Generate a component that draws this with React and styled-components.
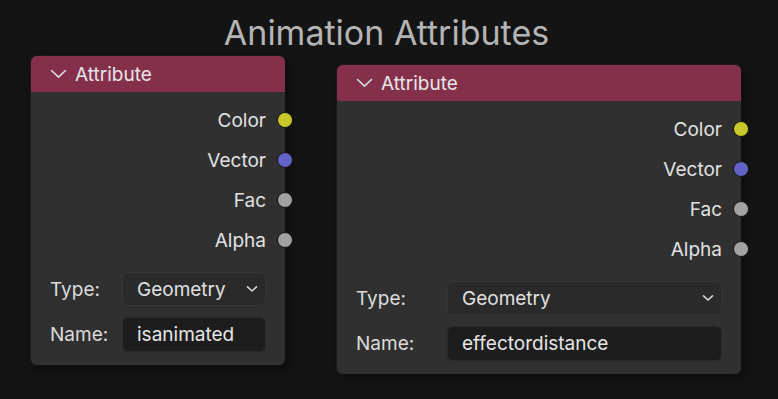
import React from 'react';
import styled, { createGlobalStyle } from 'styled-components';

const GlobalStyle = createGlobalStyle`
  html, body {
    margin: 0;
    padding: 0;
    background: #141414;
  }
  body {
    font-family: Inter, "Noto Sans", "Liberation Sans", sans-serif;
  }
`;

// Canvas & frame label
const Canvas = styled.div`
  position: relative;
  width: 778px;
  height: 399px;
  overflow: hidden;
  background: #141414;
`;

const FrameLabel = styled.div`
  text-align: center;
  padding-top: 11px;
  padding-right: 5px;
  font-size: 34px;
  line-height: 44px;
  color: #b4b4b4;
`;

// Node styles
const Node = styled.div`
  position: absolute;
  left: ${({ $x }) => $x}px;
  top: ${({ $y }) => $y}px;
  width: ${({ $w }) => $w}px;
  background: #303030;
  border-radius: 6px;
  box-shadow: 3px 3px 8px rgba(0, 0, 0, 0.55), 0 0 0 1px rgba(255, 255, 255, 0.04);
  color: #e2e2e2;
`;

const Header = styled.div`
  display: flex;
  align-items: center;
  gap: 8px;
  height: 36px;
  padding-left: 19px;
  background: #85304b;
  border-radius: 6px 6px 0 0;
  font-size: 19px;
  color: #e6e6e6;
`;

const Body = styled.div`
  display: flex;
  flex-direction: column;
  padding: 8px 19px 13px 19px;
`;

const SocketRow = styled.div`
  position: relative;
  display: flex;
  align-items: center;
  justify-content: flex-end;
  height: 40px;
  font-size: 19px;
`;

const Socket = styled.span`
  position: absolute;
  right: -27px;
  top: 50%;
  width: 14px;
  height: 14px;
  margin-top: -8px;
  border-radius: 50%;
  background: ${({ $color }) => $color};
  border: 1px solid #151515;
`;

const Props = styled.div`
  display: grid;
  grid-template-columns: ${({ $labelW }) => $labelW}px 1fr;
  row-gap: 11px;
  align-items: center;
  margin-top: 12px;
  font-size: 19px;
`;

const Label = styled.span`
  color: #dcdcdc;
`;

const Select = styled.div`
  display: flex;
  align-items: center;
  justify-content: space-between;
  height: 34px;
  box-sizing: border-box;
  padding: 0 7px 0 14px;
  background: #2a2a2a;
  border: 1px solid #363636;
  border-radius: 6px;
  color: #e0e0e0;
`;

const Input = styled.div`
  display: flex;
  align-items: center;
  height: 35px;
  box-sizing: border-box;
  padding: 0 14px;
  background: #1d1d1d;
  border: 1px solid #2a2a2a;
  border-radius: 6px;
  color: #e6e6e6;
`;

const HeaderChevron = () => (
  <svg width="17" height="10" viewBox="0 0 17 10" fill="none">
    <path d="M1.5 1.5 L8.5 8.2 L15.5 1.5" stroke="#dcdcdc" strokeWidth="1.6" strokeLinecap="round" strokeLinejoin="round" />
  </svg>
);

const DropChevron = () => (
  <svg width="12" height="8" viewBox="0 0 12 8" fill="none">
    <path d="M1.5 1.8 L6 6 L10.5 1.8" stroke="#d8d8d8" strokeWidth="1.6" strokeLinecap="round" strokeLinejoin="round" />
  </svg>
);

const sockets = [
  { name: 'Color', color: '#c7c729' },
  { name: 'Vector', color: '#6363c7' },
  { name: 'Fac', color: '#a1a1a1' },
  { name: 'Alpha', color: '#a1a1a1' },
];

const AttributeNode = ({ x, y, w, labelW, name }) => (
  <Node $x={x} $y={y} $w={w}>
    <Header>
      <HeaderChevron />
      Attribute
    </Header>
    <Body>
      {sockets.map((s) => (
        <SocketRow key={s.name}>
          {s.name}
          <Socket $color={s.color} />
        </SocketRow>
      ))}
      <Props $labelW={labelW}>
        <Label>Type:</Label>
        <Select>
          Geometry
          <DropChevron />
        </Select>
        <Label>Name:</Label>
        <Input>{name}</Input>
      </Props>
    </Body>
  </Node>
);

const App = () => (
  <>
    <GlobalStyle />
    <Canvas>
      <FrameLabel>Animation Attributes</FrameLabel>
      <AttributeNode x={31} y={56} w={254} labelW={72} name="isanimated" />
      <AttributeNode x={337} y={65} w={404} labelW={91} name="effectordistance" />
    </Canvas>
  </>
);

export default App;
